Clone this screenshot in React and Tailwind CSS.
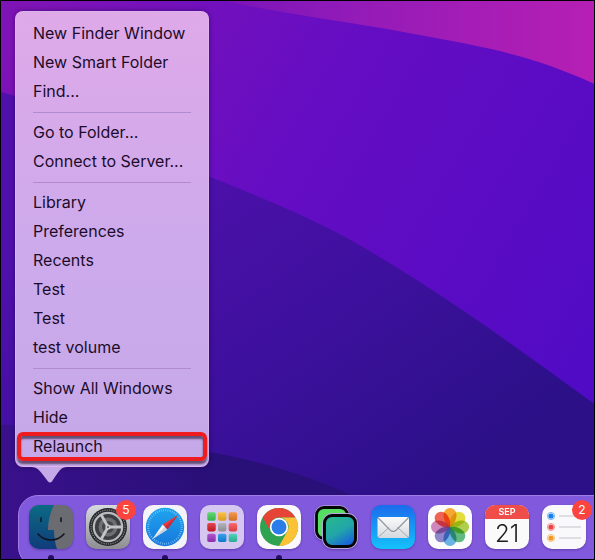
import { clsx } from "clsx";

const menuGroups = [
  ["New Finder Window", "New Smart Folder", "Find..."],
  ["Go to Folder...", "Connect to Server..."],
  ["Library", "Preferences", "Recents", "Test", "Test", "test volume"],
  ["Show All Windows", "Hide", "Relaunch"],
];

function Wallpaper() {
  return (
    <svg className="absolute inset-0 h-full w-full" viewBox="0 0 595 560" preserveAspectRatio="none" aria-hidden="true">
      <defs>
        <linearGradient id="wpTop" x1="0" y1="0" x2="1" y2="0">
          <stop offset="0" stopColor="#7a14ba" />
          <stop offset="0.35" stopColor="#931bb8" />
          <stop offset="1" stopColor="#b61fb4" />
        </linearGradient>
        <linearGradient id="wpMid" gradientUnits="userSpaceOnUse" x1="40" y1="0" x2="594" y2="330">
          <stop offset="0" stopColor="#7e13b6" />
          <stop offset="0.45" stopColor="#650dc3" />
          <stop offset="1" stopColor="#520bc4" />
        </linearGradient>
        <linearGradient id="wpLow" gradientUnits="userSpaceOnUse" x1="150" y1="150" x2="400" y2="510">
          <stop offset="0" stopColor="#5010ac" />
          <stop offset="0.5" stopColor="#3f109f" />
          <stop offset="1" stopColor="#2b1088" />
        </linearGradient>
        <linearGradient id="wpBase" x1="0" y1="0" x2="1" y2="0">
          <stop offset="0" stopColor="#3a118c" />
          <stop offset="0.6" stopColor="#290f78" />
        </linearGradient>
      </defs>
      <rect width="595" height="560" fill="url(#wpMid)" />
      <path d="M225 0C300 16 360 22 440 38C500 49 540 58 595 83V0Z" fill="url(#wpTop)" />
      <path d="M0 91C70 112 140 148 208 176C270 200 330 226 370 251C450 298 520 350 595 404V560H0Z" fill="url(#wpLow)" />
      <path d="M0 425C80 430 160 440 208 452C260 462 310 477 350 495V560H0Z" fill="url(#wpBase)" />
    </svg>
  );
}

function FinderIcon() {
  return (
    <svg viewBox="0 0 44 44" className="size-full">
      <defs>
        <linearGradient id="finderL" x1="0" y1="0" x2="0" y2="1">
          <stop offset="0" stopColor="#0b6a83" />
          <stop offset="1" stopColor="#103c7c" />
        </linearGradient>
        <clipPath id="finderClip"><rect width="44" height="44" rx="10" /></clipPath>
      </defs>
      <g clipPath="url(#finderClip)">
        <rect width="44" height="44" fill="#6b6c72" />
        <path d="M0 0H25C21 8 19 16 19 25H25C25 32 26 38 28 44H0Z" fill="url(#finderL)" />
        <path d="M12 13V16.5M32 13V16.5" stroke="#0f1520" strokeWidth="1.6" strokeLinecap="round" />
        <path d="M9 29C16 37 28 37 35 29" fill="none" stroke="#0f1520" strokeWidth="1.6" strokeLinecap="round" />
      </g>
    </svg>
  );
}

function SettingsIcon() {
  return (
    <svg viewBox="0 0 44 44" className="size-full">
      <defs>
        <linearGradient id="setBg" x1="0" y1="0" x2="0" y2="1">
          <stop offset="0" stopColor="#d6dade" />
          <stop offset="1" stopColor="#8e8e92" />
        </linearGradient>
      </defs>
      <rect width="44" height="44" rx="10" fill="url(#setBg)" />
      <circle cx="22" cy="22" r="19" fill="#26282b" />
      <circle cx="22" cy="22" r="17" fill="none" stroke="#85878a" strokeWidth="1.2" strokeDasharray="1.2 1.1" />
      <circle cx="22" cy="22" r="14.2" fill="#3c3f42" stroke="#b9bbbe" strokeWidth="2.2" />
      <circle cx="22" cy="22" r="9.5" fill="#6d7073" />
      <circle cx="22" cy="22" r="6" fill="#44474a" />
      <g stroke="#c2c4c7" strokeWidth="2.8">
        <path d="M22 22L15 9.5M22 22H36M22 22L15 34.5" />
      </g>
      <circle cx="22" cy="22" r="2.6" fill="#c8cacd" />
      <circle cx="22" cy="22" r="1" fill="#55585b" />
    </svg>
  );
}

function SafariIcon() {
  return (
    <svg viewBox="0 0 44 44" className="size-full">
      <defs>
        <linearGradient id="safBg" x1="0" y1="0" x2="0" y2="1">
          <stop offset="0" stopColor="#1fa5ee" />
          <stop offset="1" stopColor="#1777dc" />
        </linearGradient>
      </defs>
      <rect width="44" height="44" rx="10" fill="#f4f3f7" />
      <circle cx="22" cy="22" r="19.2" fill="url(#safBg)" />
      <circle cx="22" cy="22" r="16.8" fill="none" stroke="#9bd5f8" strokeWidth="2" strokeDasharray="0.6 1.6" />
      <path d="M35 10L19.6 19.6L24.4 24.4Z" fill="#e83b3b" />
      <path d="M9.5 34L19.6 19.6L24.4 24.4Z" fill="#f5f5f7" />
      <path d="M9.5 34L22 22L24.4 24.4Z" fill="#cbd3dc" />
      <path d="M35 10L22 22L24.4 24.4Z" fill="#bd2f3e" />
    </svg>
  );
}

const padColors = ["#43d158", "#fdb827", "#f5842b", "#e01f2b", "#a5a5ad", "#fb4b50", "#a136c8", "#128eea", "#31c9ac"];

function LaunchpadIcon() {
  return (
    <svg viewBox="0 0 44 44" className="size-full">
      <defs>
        <linearGradient id="padShade" x1="0" y1="0" x2="0" y2="1">
          <stop offset="0" stopColor="#fff" stopOpacity="0.18" />
          <stop offset="1" stopColor="#000" stopOpacity="0.14" />
        </linearGradient>
      </defs>
      <rect width="44" height="44" rx="10" fill="#d5c7f0" />
      {padColors.map((c, i) => (
        <g key={c} transform={`translate(${7.3 + (i % 3) * 10.7} ${7.3 + Math.floor(i / 3) * 10.7})`}>
          <rect width="8.4" height="8.4" rx="1.8" fill={c} />
          <rect width="8.4" height="8.4" rx="1.8" fill="url(#padShade)" />
        </g>
      ))}
    </svg>
  );
}

function ChromeIcon() {
  return (
    <svg viewBox="0 0 44 44" className="size-full">
      <rect width="44" height="44" rx="10" fill="#fbf9fc" />
      <circle cx="22" cy="22" r="19" fill="#2fa351" />
      <path d="M5.5 12.5A19 19 0 0 1 38.5 12.5H22A9.5 9.5 0 0 0 13.8 26.8Z" fill="#e64436" />
      <path d="M38.5 12.5A19 19 0 0 1 22 41L30.2 26.8A9.5 9.5 0 0 0 22 12.5Z" fill="#fcc236" />
      <circle cx="22" cy="22" r="9.2" fill="#fff" />
      <circle cx="22" cy="22" r="7.5" fill="#2a7de9" />
    </svg>
  );
}

function MirrorIcon() {
  return (
    <svg viewBox="0 0 44 44" className="size-full overflow-visible">
      <defs>
        <linearGradient id="mirBack" x1="0" y1="0" x2="1" y2="1">
          <stop offset="0" stopColor="#4dde62" />
          <stop offset="1" stopColor="#6fe064" />
        </linearGradient>
        <linearGradient id="mirFront" x1="0.2" y1="0" x2="0.8" y2="1">
          <stop offset="0" stopColor="#27b78d" />
          <stop offset="0.5" stopColor="#22a6a8" />
          <stop offset="1" stopColor="#1659e2" />
        </linearGradient>
      </defs>
      <rect x="2.5" y="2.5" width="31" height="31" rx="7.5" fill="url(#mirBack)" stroke="#b6a6df" strokeWidth="4.4" />
      <rect x="2.5" y="2.5" width="31" height="31" rx="7.5" fill="url(#mirBack)" stroke="#050505" strokeWidth="2.8" />
      <rect x="10.5" y="10.5" width="31" height="31" rx="7.5" fill="none" stroke="#b6a6df" strokeWidth="4.8" />
      <rect x="10.5" y="10.5" width="31" height="31" rx="7.5" fill="url(#mirFront)" stroke="#050505" strokeWidth="3" />
    </svg>
  );
}

function MailIcon() {
  return (
    <svg viewBox="0 0 44 44" className="size-full">
      <defs>
        <linearGradient id="mailBg" x1="0" y1="0" x2="0" y2="1">
          <stop offset="0" stopColor="#1c6bec" />
          <stop offset="1" stopColor="#14c2fb" />
        </linearGradient>
        <linearGradient id="mailPaper" x1="0" y1="0" x2="0" y2="1">
          <stop offset="0" stopColor="#fafafa" />
          <stop offset="1" stopColor="#d5d9dd" />
        </linearGradient>
      </defs>
      <rect width="44" height="44" rx="10" fill="url(#mailBg)" />
      <rect x="6.5" y="12" width="31.5" height="21" rx="2.2" fill="url(#mailPaper)" />
      <path d="M7.5 32L18 22.5M37 32L26.5 22.5" stroke="#9ba3ab" strokeWidth="0.9" />
      <path d="M7.3 13L19 25Q22.2 27.7 25.4 25L37.2 13" fill="none" stroke="#8e969f" strokeWidth="1.1" />
    </svg>
  );
}

const petals = ["#f8a31f", "#e6dc2b", "#a9cf3d", "#54b878", "#5cb0e2", "#877fca", "#cf7fb9", "#f2574a"];

function PhotosIcon() {
  return (
    <svg viewBox="0 0 44 44" className="size-full">
      <rect width="44" height="44" rx="10" fill="#fbfbfc" />
      {petals.map((c, i) => (
        <path
          key={c}
          d="M22 22C18 19 15.5 15.500 15.500 9.500A6.500 6.500 0 0 1 28.500 9.500C28.500 15.500 26 19 22 22Z"
          fill={c}
          fillOpacity="0.92"
          transform={`rotate(${i * 45} 22 22)`}
          className="mix-blend-multiply"
        />
      ))}
    </svg>
  );
}

function CalendarIcon() {
  return (
    <span className="flex size-full flex-col overflow-hidden rounded-[10px] bg-[#fafafa] text-center">
      <span className="bg-[#ee4d49] text-[9px] leading-[14px] font-semibold text-white">SEP</span>
      <span className="text-2xl leading-[30px] font-light text-[#1d1d20]">21</span>
    </span>
  );
}

function RemindersIcon() {
  const rows = [["#1480ea", 11], ["#ea4444", 22], ["#f39a25", 33]];
  return (
    <svg viewBox="0 0 44 44" className="size-full">
      <rect width="44" height="44" rx="10" fill="#f9f8fa" />
      {rows.map(([c, y]) => (
        <g key={c}>
          <circle cx="9" cy={y} r="3.6" fill="none" stroke={c} strokeOpacity="0.6" strokeWidth="0.9" />
          <circle cx="9" cy={y} r="2.6" fill={c} />
          <path d={`M17 ${y}H39`} stroke="#c5c3c8" strokeWidth="1" />
        </g>
      ))}
    </svg>
  );
}

const apps = [
  { name: "Finder", Icon: FinderIcon, running: true },
  { name: "System Preferences", Icon: SettingsIcon, badge: 5 },
  { name: "Safari", Icon: SafariIcon, running: true },
  { name: "Launchpad", Icon: LaunchpadIcon },
  { name: "Chrome", Icon: ChromeIcon, running: true },
  { name: "Mirror", Icon: MirrorIcon },
  { name: "Mail", Icon: MailIcon },
  { name: "Photos", Icon: PhotosIcon },
  { name: "Calendar", Icon: CalendarIcon },
  { name: "Reminders", Icon: RemindersIcon, badge: 2 },
];

function MenuItem({ label, marked }) {
  return (
    <li role="none" className="relative">
      <button type="button" role="menuitem" className="block w-full text-left text-base leading-[29px] whitespace-nowrap text-[#1c0c2a]">
        {label}
      </button>
      {marked && (
        <span className="pointer-events-none absolute -inset-x-4 inset-y-0 rounded-md border-4 border-[#ee1b1f] shadow-[0_3px_2px_rgba(30,20,40,0.6),inset_0_3px_2px_rgba(30,20,40,0.6)]" />
      )}
    </li>
  );
}

function DockMenu() {
  return (
    <div className="relative mt-2.5 ml-3.5 w-fit min-w-[194px]">
      <div role="menu" className="rounded-lg border border-[#e3bdf0]/60 bg-linear-to-b from-[#dfa9e8] via-[#cdaaec] to-[#c5a8e8] px-[17px] pt-[7px] pb-[5px] shadow-[0_0_5px_rgba(20,0,60,0.5)]">
        {menuGroups.map((group, g) => (
          <div key={g}>
            {g > 0 && (
              <div role="separator" className="flex h-3 items-center">
                <span className="h-px w-full bg-[#b18bd0]" />
              </div>
            )}
            <ul role="none">
              {group.map((label, i) => (
                <MenuItem key={i} label={label} marked={label === "Relaunch"} />
              ))}
            </ul>
          </div>
        ))}
      </div>
      <svg className="ml-4 h-4 w-9" viewBox="0 0 36 16" aria-hidden="true">
        <path d="M0 0C7 0 9 4 17 14.5Q19 16.5 21 14.5C28 4 30 0 36 0Z" fill="#c5a8e8" />
      </svg>
    </div>
  );
}

function Dock() {
  return (
    <nav className="relative mt-auto -mr-6 -mb-2 ml-[17px] flex shrink-0 gap-[13px] rounded-[20px] border border-[#a17ce6] bg-[#8059dc] px-2.5 pt-[9px] pb-[5px]">
      {apps.map(({ name, Icon, badge, running }) => (
        <button key={name} type="button" aria-label={name} className="relative flex w-11 shrink-0 flex-col items-center gap-[6px]">
          <span className="size-11 rounded-[10px] drop-shadow-[0_1px_1px_rgba(40,10,90,0.35)]"><Icon /></span>
          <span className={clsx("size-1.5 rounded-full", running && "bg-[#260f63]")} />
          {badge && (
            <span className="absolute -top-[5px] -right-1.5 size-5 rounded-full bg-[#fb4440] text-center text-xs leading-5 text-white">{badge}</span>
          )}
        </button>
      ))}
    </nav>
  );
}

export default function App() {
  return (
    <main className="relative flex h-screen flex-col overflow-hidden border border-black bg-[#3f109f] font-['Inter','Liberation_Sans',sans-serif]">
      <Wallpaper />
      <DockMenu />
      <Dock />
    </main>
  );
}
